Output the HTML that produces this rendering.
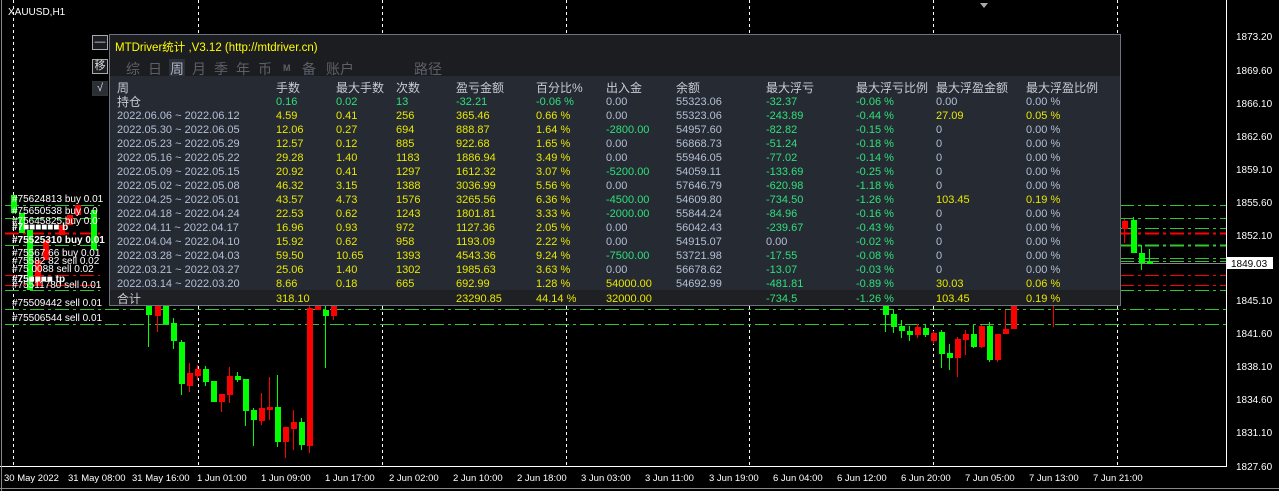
<!DOCTYPE html><html><head><meta charset="utf-8"><style>
*{margin:0;padding:0;box-sizing:border-box}
body{width:1279px;height:491px;background:#000;overflow:hidden;position:relative;font-family:"Liberation Sans","Noto Sans CJK SC",sans-serif}
svg{position:absolute;left:0;top:0}
.lbl{position:absolute;color:#fff;font-size:10px;white-space:nowrap}
#panel{position:absolute;left:109px;top:34px;width:1012px;height:272px;border:1px solid #6c7280;background:#1c1d20}
.title{position:absolute;left:5px;top:4px;color:#ffff00;font-size:11.5px}
.tabs{position:absolute;left:0;top:24px;color:#5c6068;font-size:14px;height:18px;width:600px}
.tabs span{position:absolute;top:0;white-space:nowrap}
.tabs .on{background:#2c3038;color:#aab0bc;padding:0 1px}
#tb{position:absolute;left:0;top:41px;width:1010px;height:214px;background:#252a33}
#tot{position:absolute;left:0;top:255px;width:1010px;height:15px;background:#1f2023}
.r{position:absolute;left:0;height:14px;width:1010px;font-size:11px;line-height:14px}
.r span{position:absolute;white-space:nowrap}
.y{color:#e8e800}.g{color:#2fe07a}.b{color:#b4c0d6}.h{color:#c8ccd4;font-size:12px}
.btn{position:absolute;left:92px;width:16px;height:15px;border:1px solid #aaa;background:#1a1c22;color:#ddd;font-size:11px;text-align:center;line-height:13px}
</style></head><body>
<svg width="1279" height="491">
<g stroke="#fff" stroke-dasharray="3,3" stroke-width="1">
<line x1="13.5" y1="0" x2="13.5" y2="466"/><line x1="198.5" y1="0" x2="198.5" y2="466"/><line x1="382.5" y1="0" x2="382.5" y2="466"/><line x1="566.5" y1="0" x2="566.5" y2="466"/><line x1="749.5" y1="0" x2="749.5" y2="466"/><line x1="933.5" y1="0" x2="933.5" y2="466"/><line x1="1117.5" y1="0" x2="1117.5" y2="466"/>
</g>
<g stroke="#2ec82e" stroke-dasharray="14,4,3,4" stroke-width="1">
<line x1="5" y1="309.5" x2="1226" y2="309.5"/><line x1="5" y1="324.5" x2="1226" y2="324.5"/>
<line x1="5" y1="205.5" x2="100" y2="205.5"/><line x1="1120" y1="205.5" x2="1226" y2="205.5"/>
<line x1="5" y1="218.5" x2="100" y2="218.5"/><line x1="1120" y1="218.5" x2="1226" y2="218.5"/>
<line x1="1120" y1="228.5" x2="1226" y2="228.5"/>
<line x1="5" y1="245.5" x2="100" y2="245.5"/><line x1="1120" y1="245.5" x2="1226" y2="245.5" stroke-width="2"/>
<line x1="1120" y1="258.5" x2="1226" y2="258.5"/><line x1="1120" y1="261.5" x2="1226" y2="261.5"/>
<line x1="5" y1="290.5" x2="100" y2="290.5"/><line x1="1120" y1="290.5" x2="1226" y2="290.5"/>
</g>
<g stroke="#f00" stroke-dasharray="14,4,3,4" stroke-width="1">
<line x1="5" y1="233.5" x2="100" y2="233.5" stroke-width="2"/><line x1="1120" y1="233.5" x2="1226" y2="233.5" stroke-width="2"/>
<line x1="5" y1="275.5" x2="100" y2="275.5"/><line x1="1120" y1="275.5" x2="1226" y2="275.5"/>
<line x1="5" y1="285.5" x2="100" y2="285.5"/><line x1="1120" y1="285.5" x2="1226" y2="285.5"/>
</g>
<line x1="1120" y1="263.5" x2="1226" y2="263.5" stroke="#888"/>
<g id="c">
<rect x="11" y="195" width="6" height="18" fill="#0f0"/><rect x="19" y="213" width="6" height="20" fill="#0f0"/><rect x="27" y="230" width="6" height="60" fill="#0f0"/><rect x="35" y="260" width="6" height="25" fill="#f00"/><rect x="43" y="240" width="6" height="20" fill="#f00"/><rect x="59" y="225" width="6" height="10" fill="#f00"/><rect x="67" y="215" width="6" height="10" fill="#f00"/><rect x="75" y="205" width="6" height="10" fill="#f00"/><rect x="91" y="210" width="6" height="40" fill="#0f0"/>
</g>
<g stroke-width="1" id="cs"></g>
<line x1="1226.5" y1="0" x2="1226.5" y2="467" stroke="#fff"/>
<line x1="0" y1="466.5" x2="1227" y2="466.5" stroke="#fff"/>
<line x1="0" y1="488.5" x2="1279" y2="488.5" stroke="#888"/>
<line x1="1.5" y1="0" x2="1.5" y2="491" stroke="#888"/>
<g fill="#fff" font-size="10" font-family="Liberation Sans">
<text x="8" y="15">XAUUSD,H1</text>
<text x="1236" y="40">1873.20</text><text x="1236" y="74">1869.60</text><text x="1236" y="107">1866.10</text><text x="1236" y="140">1862.60</text><text x="1236" y="173">1859.10</text><text x="1236" y="206">1855.60</text><text x="1236" y="239">1852.10</text><text x="1236" y="304">1845.10</text><text x="1236" y="337">1841.60</text><text x="1236" y="370">1838.10</text><text x="1236" y="403">1834.60</text><text x="1236" y="436">1831.10</text><text x="1236" y="470">1827.60</text>
</g>
<rect x="1227" y="257" width="46" height="12" fill="#fff"/>
<text x="1231" y="267" font-size="10" fill="#000" font-family="Liberation Sans">1849.03</text>
<g fill="#fff" font-size="9.5" font-family="Liberation Sans">
<text x="4" y="481">30 May 2022</text><text x="68" y="481">31 May 08:00</text><text x="132" y="481">31 May 16:00</text><text x="197" y="481">1 Jun 01:00</text><text x="261" y="481">1 Jun 09:00</text><text x="325" y="481">1 Jun 17:00</text><text x="389" y="481">2 Jun 02:00</text><text x="453" y="481">2 Jun 10:00</text><text x="517" y="481">2 Jun 18:00</text><text x="581" y="481">3 Jun 03:00</text><text x="645" y="481">3 Jun 11:00</text><text x="709" y="481">3 Jun 19:00</text><text x="773" y="481">6 Jun 04:00</text><text x="837" y="481">6 Jun 12:00</text><text x="901" y="481">6 Jun 20:00</text><text x="965" y="481">7 Jun 05:00</text><text x="1029" y="481">7 Jun 13:00</text><text x="1093" y="481">7 Jun 21:00</text>
</g>
<polygon points="980,3 988,3 984,8" fill="#aaa"/>
</svg>
<script>
var d=[[148,305,315,305,347,'g'],[157,305,316,305,332,'r'],[165,305,324,305,324,'g'],[173,323,341,318,349,'g'],[181,342,384,340,395,'g'],[189,373,386,363,392,'r'],[197,369,376,365,380,'r'],[205,369,382,366,386,'g'],[213,381,402,381,402,'g'],[221,394,402,394,412,'r'],[229,376,395,367,403,'r'],[237,376,380,372,382,'g'],[245,379,411,379,426,'g'],[253,410,420,408,446,'g'],[261,408,421,393,425,'r'],[269,407,410,377,420,'r'],[277,407,442,375,447,'g'],[285,427,442,427,458,'r'],[293,422,429,410,450,'r'],[301,422,445,418,450,'g'],[309,308,446,305,453,'r'],[317,305,310,305,310,'r'],[325,310,316,306,368,'g'],[333,305,316,305,320,'r'],
[885,305,315,305,332,'g'],[893,314,327,310,333,'g'],[901,326,331,320,338,'g'],[909,331,335,326,341,'g'],[917,327,335,324,338,'r'],[925,328,335,324,337,'g'],[933,333,341,331,344,'r'],[941,332,354,330,368,'g'],[949,353,358,344,370,'g'],[957,339,358,337,377,'r'],[965,334,340,330,355,'r'],[973,334,347,325,348,'g'],[981,326,347,325,348,'r'],[989,326,360,322,362,'g'],[997,334,360,334,362,'r'],[1005,329,334,310,334,'r'],[1013,305,329,305,329,'r'],[1053,305,306,305,327,'r'],
[1124,221,229,219,243,'r'],[1133,220,253,217,253,'g'],[1141,253,263,245,270,'g'],[1149,262,264,249,264,'g']];
var s='';d.forEach(function(c){var f=c[5]=='g'?'#0f0':'#f00';s+='<line x1="'+(c[0]+0.5)+'" y1="'+c[3]+'" x2="'+(c[0]+0.5)+'" y2="'+c[4]+'" stroke="'+f+'"/><rect x="'+(c[0]-2)+'" y="'+c[1]+'" width="6" height="'+Math.max(1,c[2]-c[1])+'" fill="'+f+'"/>';});
document.getElementById('cs').innerHTML=s;
</script>
<div class="lbl" style="left:12px;top:194px">#75624813 buy 0.01</div>
<div class="lbl" style="left:12px;top:206px">#75650538 buy 0.0</div>
<div class="lbl" style="left:12px;top:216px">#75645825 buy 0.0</div>
<div class="lbl" style="left:12px;top:222px;font-weight:bold">#7■■■■■■ b</div>
<div class="lbl" style="left:12px;top:235px;font-weight:bold">#75525310 buy 0.01</div>
<div class="lbl" style="left:12px;top:248px">#75567 66 buy 0.01</div>
<div class="lbl" style="left:12px;top:256px">#75582 82 sell 0.02</div>
<div class="lbl" style="left:12px;top:264px">#75 0088 sell 0.02</div>
<div class="lbl" style="left:12px;top:274px;font-weight:bold">#75■■■■ tp</div>
<div class="lbl" style="left:12px;top:280px">#75511780 sell 0.01</div>
<div class="lbl" style="left:12px;top:298px">#75509442 sell 0.01</div>
<div class="lbl" style="left:12px;top:313px">#75506544 sell 0.01</div>
<div class="btn" style="top:35px">—</div>
<div class="btn" style="top:59px">移</div>
<div class="btn" style="top:81px;border-color:#333;background:#2a2e36">√</div>
<div id="panel">
<div class="title">MTDriver统计 ,V3.12 (http://mtdriver.cn)</div>
<div class="tabs"><span style="left:16px">综</span><span style="left:38px">日</span><span class="on" style="left:59px">周</span><span style="left:82px">月</span><span style="left:104px">季</span><span style="left:126px">年</span><span style="left:148px">币</span><span style="left:173px;font-size:9px;font-weight:bold;top:4px">M</span><span style="left:192px">备</span><span style="left:216px">账户</span><span style="left:304px">路径</span></div>
<div id="tb"></div>
<div id="tot"></div>
<div id="rows"></div>
</div>
<script>
var X=[7,166,226,286,346,426,496,566,656,746,826,916];
var R=[
['h','周','h手数','h最大手数','h次数','h盈亏金额','h百分比%','h出入金','h余额','h最大浮亏','h最大浮亏比例','h最大浮盈金额','h最大浮盈比例'],
['h','持仓','g0.16','g0.02','g13','g-32.21','g-0.06 %','b0.00','b55323.06','g-32.37','g-0.06 %','b0.00','b0.00 %'],
['b','2022.06.06 ~ 2022.06.12','y4.59','y0.41','y256','y365.46','y0.66 %','b0.00','b55323.06','g-243.89','g-0.44 %','y27.09','y0.05 %'],
['b','2022.05.30 ~ 2022.06.05','y12.06','y0.27','y694','y888.87','y1.64 %','g-2800.00','b54957.60','g-82.82','g-0.15 %','b0','b0.00 %'],
['b','2022.05.23 ~ 2022.05.29','y12.57','y0.12','y885','y922.68','y1.65 %','b0.00','b56868.73','g-51.24','g-0.18 %','b0','b0.00 %'],
['b','2022.05.16 ~ 2022.05.22','y29.28','y1.40','y1183','y1886.94','y3.49 %','b0.00','b55946.05','g-77.02','g-0.14 %','b0','b0.00 %'],
['b','2022.05.09 ~ 2022.05.15','y20.92','y0.41','y1297','y1612.32','y3.07 %','g-5200.00','b54059.11','g-133.69','g-0.25 %','b0','b0.00 %'],
['b','2022.05.02 ~ 2022.05.08','y46.32','y3.15','y1388','y3036.99','y5.56 %','b0.00','b57646.79','g-620.98','g-1.18 %','b0','b0.00 %'],
['b','2022.04.25 ~ 2022.05.01','y43.57','y4.73','y1576','y3265.56','y6.36 %','g-4500.00','b54609.80','g-734.50','g-1.26 %','y103.45','y0.19 %'],
['b','2022.04.18 ~ 2022.04.24','y22.53','y0.62','y1243','y1801.81','y3.33 %','g-2000.00','b55844.24','g-84.96','g-0.16 %','b0','b0.00 %'],
['b','2022.04.11 ~ 2022.04.17','y16.96','y0.93','y972','y1127.36','y2.05 %','b0.00','b56042.43','g-239.67','g-0.43 %','b0','b0.00 %'],
['b','2022.04.04 ~ 2022.04.10','y15.92','y0.62','y958','y1193.09','y2.22 %','b0.00','b54915.07','b0.00','g-0.02 %','b0','b0.00 %'],
['b','2022.03.28 ~ 2022.04.03','y59.50','y10.65','y1393','y4543.36','y9.24 %','g-7500.00','b53721.98','g-17.55','g-0.08 %','b0','b0.00 %'],
['b','2022.03.21 ~ 2022.03.27','y25.06','y1.40','y1302','y1985.63','y3.63 %','b0.00','b56678.62','g-13.07','g-0.03 %','b0','b0.00 %'],
['b','2022.03.14 ~ 2022.03.20','y8.66','y0.18','y665','y692.99','y1.28 %','y54000.00','b54692.99','g-481.81','g-0.89 %','y30.03','y0.06 %'],
['h','合计','y318.10','y','y','y23290.85','y44.14 %','y32000.00','y','g-734.5','g-1.26 %','y103.45','y0.19 %']];
var tops=[46,60,74,88,102,116,130,144,158,172,186,200,214,228,242,257];
var h='';R.forEach(function(r,i){h+='<div class="r" style="top:'+tops[i]+'px"><span class="'+r[0]+'" style="left:'+X[0]+'px">'+r[1]+'</span>';for(var j=2;j<r.length;j++){h+='<span class="'+r[j][0]+'" style="left:'+X[j-1]+'px">'+r[j].slice(1)+'</span>';}h+='</div>';});
document.getElementById('rows').innerHTML=h;
</script>
</body></html>
